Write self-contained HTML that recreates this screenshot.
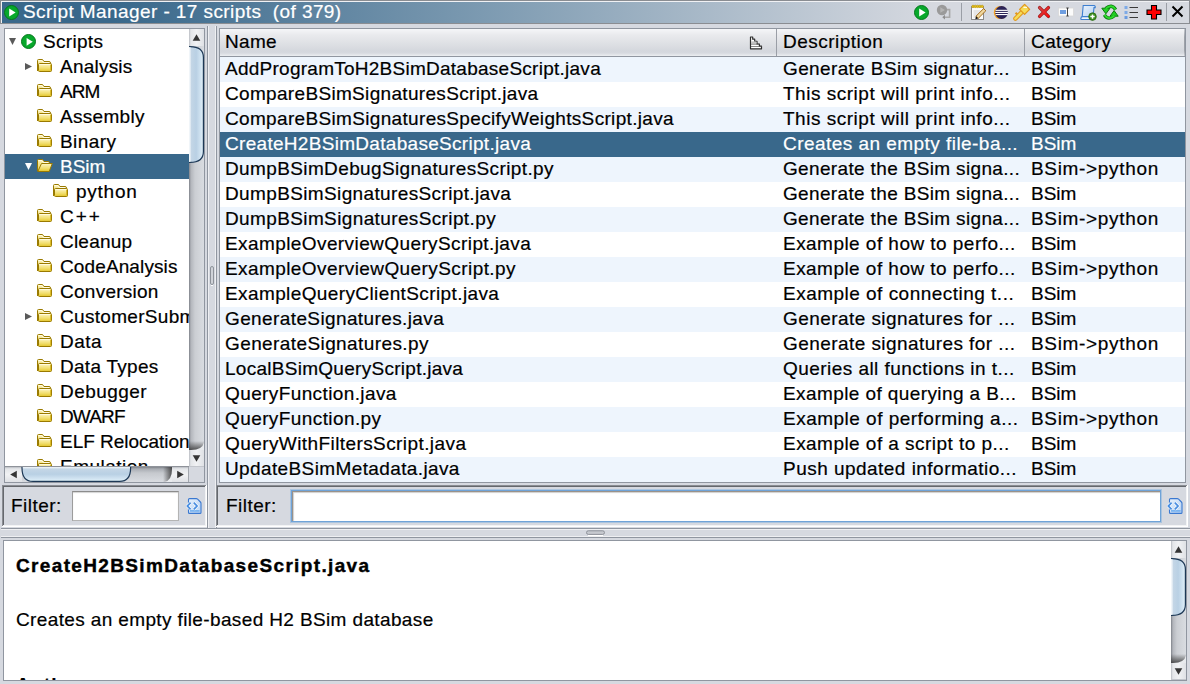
<!DOCTYPE html>
<html><head><meta charset="utf-8"><style>
*{margin:0;padding:0;box-sizing:border-box}
html,body{width:1190px;height:684px;overflow:hidden;background:#d6d9e0;font-family:"Liberation Sans",sans-serif;font-size:19px;color:#000}
.a{position:absolute}
svg.a{display:block}
.t{position:absolute;white-space:nowrap;letter-spacing:0.27px;-webkit-text-stroke:0.2px currentColor;line-height:25px;height:25px}
.w{color:#fff}
.el{letter-spacing:0.72px}
</style></head><body>
<svg width="0" height="0" style="position:absolute"><defs>
<linearGradient id="fg" x1="0" y1="0" x2="0" y2="1"><stop offset="0" stop-color="#fdf6c6"/><stop offset="0.6" stop-color="#f1de6e"/><stop offset="1" stop-color="#e3c52a"/></linearGradient>
<linearGradient id="fgb" x1="0" y1="0" x2="0" y2="1"><stop offset="0" stop-color="#fbf1b4"/><stop offset="1" stop-color="#ead15a"/></linearGradient>
<linearGradient id="thv" x1="0" y1="0" x2="1" y2="0"><stop offset="0" stop-color="#f4f8fb"/><stop offset="0.15" stop-color="#c4d6e6"/><stop offset="0.5" stop-color="#b9d0e4"/><stop offset="0.85" stop-color="#d4e6f3"/><stop offset="1" stop-color="#e6f4fb"/></linearGradient>
<linearGradient id="thh" x1="0" y1="0" x2="0" y2="1"><stop offset="0" stop-color="#f4f8fb"/><stop offset="0.15" stop-color="#c4d6e6"/><stop offset="0.5" stop-color="#b9d0e4"/><stop offset="0.85" stop-color="#d4e6f3"/><stop offset="1" stop-color="#e6f9fd"/></linearGradient>
<linearGradient id="doc" x1="0" y1="0" x2="1" y2="1"><stop offset="0" stop-color="#e9f2fc"/><stop offset="1" stop-color="#b4d0f2"/></linearGradient>
<linearGradient id="trv" x1="0" y1="0" x2="1" y2="0"><stop offset="0" stop-color="#7f838a"/><stop offset="0.13" stop-color="#b3b6bc"/><stop offset="0.4" stop-color="#cbced3"/><stop offset="1" stop-color="#d9dce1"/></linearGradient>
<linearGradient id="trh" x1="0" y1="0" x2="0" y2="1"><stop offset="0" stop-color="#7f838a"/><stop offset="0.13" stop-color="#a9adb3"/><stop offset="0.4" stop-color="#c6c9ce"/><stop offset="1" stop-color="#d9dce1"/></linearGradient>
<linearGradient id="btv" x1="0" y1="0" x2="1" y2="0"><stop offset="0" stop-color="#b9bcc2"/><stop offset="0.12" stop-color="#e4e6e9"/><stop offset="0.5" stop-color="#f1f2f4"/><stop offset="1" stop-color="#dfe1e5"/></linearGradient>
<linearGradient id="bth" x1="0" y1="0" x2="0" y2="1"><stop offset="0" stop-color="#b9bcc2"/><stop offset="0.12" stop-color="#e4e6e9"/><stop offset="0.5" stop-color="#f1f2f4"/><stop offset="1" stop-color="#dfe1e5"/></linearGradient>
<linearGradient id="shv" x1="0" y1="0" x2="0" y2="1"><stop offset="0" stop-color="#3a3a3a" stop-opacity="0"/><stop offset="1" stop-color="#3a3a3a" stop-opacity="0.85"/></linearGradient>
<linearGradient id="shh" x1="0" y1="0" x2="1" y2="0"><stop offset="0" stop-color="#3a3a3a" stop-opacity="0"/><stop offset="1" stop-color="#3a3a3a" stop-opacity="0.85"/></linearGradient>
<radialGradient id="grn" cx="0.4" cy="0.35" r="0.7"><stop offset="0" stop-color="#16c23a"/><stop offset="1" stop-color="#07a52a"/></radialGradient>
</defs></svg>
<div class="a" style="left:0px;top:0px;width:1190px;height:1px;background:#8a8d92;"></div>
<div class="a" style="left:0px;top:0px;width:1px;height:24px;background:#8a8d92;"></div>
<div class="a" style="left:1px;top:1px;width:1188px;height:1px;background:#f0f1f4;"></div>
<div class="a" style="left:1px;top:1px;width:1px;height:22px;background:#f0f1f4;"></div>
<div class="a" style="left:2px;top:2px;width:1187px;height:21px;background:linear-gradient(90deg,#39688b 0px,#39688b 110px,#7c9ab1 480px,#d6d9e0 930px);"></div>
<div class="a" style="left:0px;top:23px;width:1190px;height:1px;background:#8a8d92;"></div>
<div class="a" style="left:1189px;top:0px;width:1px;height:24px;background:#8a8d92;"></div>
<svg class="a" style="left:3.8px;top:4.6px" width="15" height="15" viewBox="0 0 15 15"><circle cx="7.5" cy="7.5" r="7" fill="#08a82b" stroke="#05781c" stroke-width="1"/><path d="M5.2 3.6 L11.6 7.6 L5.2 11.6 Z" fill="#fff"/></svg>
<div class="t w" style="left:23px;top:0px;line-height:24px;letter-spacing:0.420px">Script Manager - 17 scripts&nbsp; (of 379)</div>
<svg class="a" style="left:914px;top:4.6px" width="15" height="15" viewBox="0 0 15 15"><circle cx="7.5" cy="7.5" r="7" fill="#08a82b" stroke="#05781c" stroke-width="1"/><path d="M5.2 3.6 L11.6 7.6 L5.2 11.6 Z" fill="#fff"/></svg>
<svg class="a" style="left:936px;top:4px" width="16" height="16" viewBox="0 0 16 16"><circle cx="6" cy="6" r="5.2" fill="#9a9a9a"/><path d="M4.3 3.2 L9 6 L4.3 8.8 Z" fill="#b4b4b4"/><path d="M11 5.6 L13.6 5.6 L13.6 13.2 L8 13.2" fill="none" stroke="#a8a8a8" stroke-width="1.6"/><path d="M6.3 13.2 L9 10.8 L9 15.6 Z" fill="#8e8e8e"/></svg>
<div class="a" style="left:961px;top:3px;width:1px;height:18px;background:#9a9ea6;"></div>
<svg class="a" style="left:970px;top:4px" width="17" height="16" viewBox="0 0 17 16"><rect x="1.5" y="2.6" width="12" height="12.9" fill="#fbfbfb" stroke="#8a8a8a" stroke-width="1"/><path d="M3.5 7h7M3.5 9h7M3.5 11h5M3.5 13h5" stroke="#c9c9c9" stroke-width="0.8"/><circle cx="3" cy="2.4" r="1.25" fill="#e8c21a" stroke="#b08d00" stroke-width="0.5"/><circle cx="5.3" cy="2.4" r="1.25" fill="#e8c21a" stroke="#b08d00" stroke-width="0.5"/><circle cx="7.6" cy="2.4" r="1.25" fill="#e8c21a" stroke="#b08d00" stroke-width="0.5"/><circle cx="9.9" cy="2.4" r="1.25" fill="#e8c21a" stroke="#b08d00" stroke-width="0.5"/><circle cx="12.2" cy="2.4" r="1.25" fill="#e8c21a" stroke="#b08d00" stroke-width="0.5"/><path d="M6 12.2 L13.6 4.6 L15.8 6.8 L8.2 14.4 Z" fill="#f0d8a0" stroke="#9a5e08" stroke-width="0.9"/><path d="M6 12.2 L8.2 14.4 L5.3 15.3 Z" fill="#111"/></svg>
<svg class="a" style="left:993px;top:5px" width="16" height="15" viewBox="0 0 16 15"><circle cx="7.4" cy="7.5" r="6.6" fill="#f5a020"/><circle cx="8.6" cy="7.5" r="6.4" fill="#2b2357"/><rect x="2.6" y="4.8" width="12.2" height="1.1" fill="#fff"/><rect x="2.2" y="6.9" width="12.8" height="1.1" fill="#fff"/><rect x="2.6" y="9.0" width="12.2" height="1.1" fill="#fff"/></svg>
<svg class="a" style="left:1013px;top:3px" width="18" height="18" viewBox="0 0 18 18"><path d="M8.6 9.4 L2.4 15.6" stroke="#e2981c" stroke-width="4.4" stroke-linecap="round"/><path d="M4.6 11.8 L2.6 9.8 M6.6 13.2 L5.2 11.8" stroke="#e2981c" stroke-width="2.2"/><path d="M8.6 9.4 L2.4 15.6" stroke="#f6dc58" stroke-width="2.4" stroke-linecap="round"/><path d="M11.6 1.4 L16.6 6.4 L11.6 11.4 L6.6 6.4 Z" fill="#f6dc58" stroke="#e2981c" stroke-width="1.3" stroke-linejoin="round"/><path d="M11 4.4 L13.4 4.4" stroke="#fffbe0" stroke-width="1.4" stroke-linecap="round"/></svg>
<svg class="a" style="left:1037px;top:5px" width="14" height="14" viewBox="0 0 14 14"><defs><linearGradient id="rx" x1="0" y1="0" x2="1" y2="1"><stop offset="0" stop-color="#d04848"/><stop offset="1" stop-color="#ff0a0a"/></linearGradient></defs><path d="M2.6 2.6 L11.4 11.4 M11.4 2.6 L2.6 11.4" stroke="#a01818" stroke-width="3.4" stroke-linecap="round"/><path d="M2.6 2.6 L11.4 11.4 M11.4 2.6 L2.6 11.4" stroke="url(#rx)" stroke-width="2" stroke-linecap="round"/></svg>
<svg class="a" style="left:1058px;top:7px" width="16" height="10" viewBox="0 0 16 10"><rect x="0.5" y="1" width="15" height="8" fill="#fbfbfb" stroke="#d8d8d8" stroke-width="0.8"/><rect x="2" y="3" width="6" height="4" fill="#6f9ee0"/><path d="M9.5 1v8M8.3 1h2.4M8.3 9h2.4" stroke="#333" stroke-width="0.9"/></svg>
<svg class="a" style="left:1080px;top:4px" width="17" height="17" viewBox="0 0 17 17"><path d="M3.2 1.5 L14 1.5 Q15.6 1.8 15.2 3.6 L14 3.6 L13 12.8 L2.2 12.8 Z" fill="url(#doc)" stroke="#3d7fd0" stroke-width="1.1"/><path d="M0.8 14.5 Q1 12.5 3 12.6 L13 12.6 L12.4 15.5 L2 15.5 Q0.6 15.5 0.8 14.5 Z" fill="#eef4fc" stroke="#3d7fd0" stroke-width="1.1"/><circle cx="12.5" cy="12.6" r="3.8" fill="#3b8d1e" stroke="#2a6a12" stroke-width="0.8"/><path d="M12.5 10.4v4.4M10.3 12.6h4.4" stroke="#fff" stroke-width="1.5"/></svg>
<svg class="a" style="left:1101px;top:4px" width="18" height="16" viewBox="0 0 18 16"><g id="ra"><path d="M14.6 5.6 Q10.8 -0.6 4.6 4.6" stroke="#0b7a0e" stroke-width="3.4" fill="none"/><path d="M0.8 4.2 L9 4.2 L4.9 9.8 Z" fill="#20cf22" stroke="#0b7a0e" stroke-width="1"/><path d="M14.6 5.6 Q10.8 -0.6 4.6 4.6" stroke="#2ddc2d" stroke-width="1.8" fill="none"/></g><g transform="rotate(180 9 8.2)"><path d="M14.6 5.6 Q10.8 -0.6 4.6 4.6" stroke="#0b7a0e" stroke-width="3.4" fill="none"/><path d="M0.8 4.2 L9 4.2 L4.9 9.8 Z" fill="#20cf22" stroke="#0b7a0e" stroke-width="1"/><path d="M14.6 5.6 Q10.8 -0.6 4.6 4.6" stroke="#2ddc2d" stroke-width="1.8" fill="none"/></g></svg>
<svg class="a" style="left:1124px;top:5px" width="15" height="15" viewBox="0 0 15 15"><rect x="0.5" y="1" width="3" height="3" fill="#7eaae6"/><rect x="0.5" y="6" width="3" height="3" fill="#7eaae6"/><rect x="0.5" y="11" width="3" height="3" fill="#6b9be0"/><path d="M5.5 2.5h8.5M5.5 7.5h8.5M5.5 12.5h8.5" stroke="#3a3a3a" stroke-width="1"/></svg>
<svg class="a" style="left:1146px;top:4px" width="16" height="16" viewBox="0 0 16 16"><path d="M5.5 1.5 h5 v4.5 h4.5 v4.5 h-4.5 v4.5 h-5 v-4.5 h-4.5 v-4.5 h4.5 Z" fill="#f00" stroke="#000" stroke-width="1.1"/></svg>
<div class="a" style="left:1166px;top:3px;width:1px;height:18px;background:#9a9ea6;"></div>
<svg class="a" style="left:1171px;top:5px" width="13" height="13" viewBox="0 0 13 13"><path d="M1.5 1.5 L11.5 11.5 M11.5 1.5 L1.5 11.5" stroke="#000" stroke-width="2"/></svg>
<div class="a" style="left:4px;top:28px;width:201px;height:455px;background:#fff;border:1px solid #9096a0"></div>
<div class="a" style="left:5px;top:29px;width:184px;height:25px;overflow:hidden"><svg class="a" style="left:4px;top:9px" width="8" height="8" viewBox="0 0 8 8"><path d="M0 0 L7 0 L3.5 7 Z" fill="#5a5a5a"/></svg><svg class="a" style="left:16px;top:5px" width="15" height="15" viewBox="0 0 15 15"><circle cx="7.5" cy="7.5" r="7" fill="#08a82b" stroke="#05781c" stroke-width="1"/><path d="M5.6 3.9 L11.8 7.8 L5.6 11.7 Z" fill="#fff"/></svg><div class="t" style="left:38px;top:0px;letter-spacing:0.307px">Scripts</div></div>
<div class="a" style="left:5px;top:54px;width:184px;height:25px;overflow:hidden"><svg class="a" style="left:20px;top:9px" width="8" height="8" viewBox="0 0 8 8"><path d="M0 0 L7 3.5 L0 7 Z" fill="#5a5a5a"/></svg><svg class="a" style="left:32px;top:5px" width="16" height="15" viewBox="0 0 16 15"><path d="M0.5 12 V1.5 Q0.5 0.5 1.5 0.5 H5.5 L7 2.5 H12 Q13.5 2.5 13.5 4 V5" fill="url(#fgb)" stroke="#9a7a00" stroke-width="1"/><path d="M1.5 1.6 H5 L6.3 3.5 H12.4" fill="none" stroke="#fffce8" stroke-width="1"/><rect x="1.5" y="4.5" width="13" height="8" rx="1" fill="url(#fg)" stroke="#9a7a00" stroke-width="1"/><path d="M2.5 5.6 H13.5" stroke="#fffbe0" stroke-width="1"/><path d="M13.6 5.6 V11.4" stroke="#d9b820" stroke-width="1"/></svg><div class="t" style="left:55px;top:0px;letter-spacing:0.221px">Analysis</div></div>
<div class="a" style="left:5px;top:79px;width:184px;height:25px;overflow:hidden"><svg class="a" style="left:32px;top:5px" width="16" height="15" viewBox="0 0 16 15"><path d="M0.5 12 V1.5 Q0.5 0.5 1.5 0.5 H5.5 L7 2.5 H12 Q13.5 2.5 13.5 4 V5" fill="url(#fgb)" stroke="#9a7a00" stroke-width="1"/><path d="M1.5 1.6 H5 L6.3 3.5 H12.4" fill="none" stroke="#fffce8" stroke-width="1"/><rect x="1.5" y="4.5" width="13" height="8" rx="1" fill="url(#fg)" stroke="#9a7a00" stroke-width="1"/><path d="M2.5 5.6 H13.5" stroke="#fffbe0" stroke-width="1"/><path d="M13.6 5.6 V11.4" stroke="#d9b820" stroke-width="1"/></svg><div class="t" style="left:55px;top:0px;letter-spacing:-0.922px">ARM</div></div>
<div class="a" style="left:5px;top:104px;width:184px;height:25px;overflow:hidden"><svg class="a" style="left:32px;top:5px" width="16" height="15" viewBox="0 0 16 15"><path d="M0.5 12 V1.5 Q0.5 0.5 1.5 0.5 H5.5 L7 2.5 H12 Q13.5 2.5 13.5 4 V5" fill="url(#fgb)" stroke="#9a7a00" stroke-width="1"/><path d="M1.5 1.6 H5 L6.3 3.5 H12.4" fill="none" stroke="#fffce8" stroke-width="1"/><rect x="1.5" y="4.5" width="13" height="8" rx="1" fill="url(#fg)" stroke="#9a7a00" stroke-width="1"/><path d="M2.5 5.6 H13.5" stroke="#fffbe0" stroke-width="1"/><path d="M13.6 5.6 V11.4" stroke="#d9b820" stroke-width="1"/></svg><div class="t" style="left:55px;top:0px;letter-spacing:0.309px">Assembly</div></div>
<div class="a" style="left:5px;top:129px;width:184px;height:25px;overflow:hidden"><svg class="a" style="left:32px;top:5px" width="16" height="15" viewBox="0 0 16 15"><path d="M0.5 12 V1.5 Q0.5 0.5 1.5 0.5 H5.5 L7 2.5 H12 Q13.5 2.5 13.5 4 V5" fill="url(#fgb)" stroke="#9a7a00" stroke-width="1"/><path d="M1.5 1.6 H5 L6.3 3.5 H12.4" fill="none" stroke="#fffce8" stroke-width="1"/><rect x="1.5" y="4.5" width="13" height="8" rx="1" fill="url(#fg)" stroke="#9a7a00" stroke-width="1"/><path d="M2.5 5.6 H13.5" stroke="#fffbe0" stroke-width="1"/><path d="M13.6 5.6 V11.4" stroke="#d9b820" stroke-width="1"/></svg><div class="t" style="left:55px;top:0px;letter-spacing:0.450px">Binary</div></div>
<div class="a" style="left:5px;top:154px;width:184px;height:25px;overflow:hidden"><div class="a" style="left:0;top:0;width:184px;height:25px;background:#39688b"></div><svg class="a" style="left:20px;top:9px" width="8" height="8" viewBox="0 0 8 8"><path d="M0 0 L7 0 L3.5 7 Z" fill="#fff"/></svg><svg class="a" style="left:32px;top:5px" width="16" height="15" viewBox="0 0 16 15"><path d="M0.5 12 V1.5 Q0.5 0.5 1.5 0.5 H5.5 L7 2.5 H11 Q12.5 2.5 12.5 4 V5" fill="url(#fgb)" stroke="#9a7a00" stroke-width="1"/><path d="M1.5 1.6 H5 L6.3 3.5 H11.4" fill="none" stroke="#fffce8" stroke-width="1"/><path d="M0.8 12.5 L4.5 4.5 H15.3 L12.2 12.5 Z" fill="url(#fg)" stroke="#9a7a00" stroke-width="1"/></svg><div class="t w" style="left:55px;top:0px;letter-spacing:-0.028px">BSim</div></div>
<div class="a" style="left:5px;top:179px;width:184px;height:25px;overflow:hidden"><svg class="a" style="left:48px;top:5px" width="16" height="15" viewBox="0 0 16 15"><path d="M0.5 12 V1.5 Q0.5 0.5 1.5 0.5 H5.5 L7 2.5 H12 Q13.5 2.5 13.5 4 V5" fill="url(#fgb)" stroke="#9a7a00" stroke-width="1"/><path d="M1.5 1.6 H5 L6.3 3.5 H12.4" fill="none" stroke="#fffce8" stroke-width="1"/><rect x="1.5" y="4.5" width="13" height="8" rx="1" fill="url(#fg)" stroke="#9a7a00" stroke-width="1"/><path d="M2.5 5.6 H13.5" stroke="#fffbe0" stroke-width="1"/><path d="M13.6 5.6 V11.4" stroke="#d9b820" stroke-width="1"/></svg><div class="t" style="left:71px;top:0px;letter-spacing:0.753px">python</div></div>
<div class="a" style="left:5px;top:204px;width:184px;height:25px;overflow:hidden"><svg class="a" style="left:32px;top:5px" width="16" height="15" viewBox="0 0 16 15"><path d="M0.5 12 V1.5 Q0.5 0.5 1.5 0.5 H5.5 L7 2.5 H12 Q13.5 2.5 13.5 4 V5" fill="url(#fgb)" stroke="#9a7a00" stroke-width="1"/><path d="M1.5 1.6 H5 L6.3 3.5 H12.4" fill="none" stroke="#fffce8" stroke-width="1"/><rect x="1.5" y="4.5" width="13" height="8" rx="1" fill="url(#fg)" stroke="#9a7a00" stroke-width="1"/><path d="M2.5 5.6 H13.5" stroke="#fffbe0" stroke-width="1"/><path d="M13.6 5.6 V11.4" stroke="#d9b820" stroke-width="1"/></svg><div class="t" style="left:55px;top:0px;letter-spacing:1.957px">C++</div></div>
<div class="a" style="left:5px;top:229px;width:184px;height:25px;overflow:hidden"><svg class="a" style="left:32px;top:5px" width="16" height="15" viewBox="0 0 16 15"><path d="M0.5 12 V1.5 Q0.5 0.5 1.5 0.5 H5.5 L7 2.5 H12 Q13.5 2.5 13.5 4 V5" fill="url(#fgb)" stroke="#9a7a00" stroke-width="1"/><path d="M1.5 1.6 H5 L6.3 3.5 H12.4" fill="none" stroke="#fffce8" stroke-width="1"/><rect x="1.5" y="4.5" width="13" height="8" rx="1" fill="url(#fg)" stroke="#9a7a00" stroke-width="1"/><path d="M2.5 5.6 H13.5" stroke="#fffbe0" stroke-width="1"/><path d="M13.6 5.6 V11.4" stroke="#d9b820" stroke-width="1"/></svg><div class="t" style="left:55px;top:0px;letter-spacing:0.214px">Cleanup</div></div>
<div class="a" style="left:5px;top:254px;width:184px;height:25px;overflow:hidden"><svg class="a" style="left:32px;top:5px" width="16" height="15" viewBox="0 0 16 15"><path d="M0.5 12 V1.5 Q0.5 0.5 1.5 0.5 H5.5 L7 2.5 H12 Q13.5 2.5 13.5 4 V5" fill="url(#fgb)" stroke="#9a7a00" stroke-width="1"/><path d="M1.5 1.6 H5 L6.3 3.5 H12.4" fill="none" stroke="#fffce8" stroke-width="1"/><rect x="1.5" y="4.5" width="13" height="8" rx="1" fill="url(#fg)" stroke="#9a7a00" stroke-width="1"/><path d="M2.5 5.6 H13.5" stroke="#fffbe0" stroke-width="1"/><path d="M13.6 5.6 V11.4" stroke="#d9b820" stroke-width="1"/></svg><div class="t" style="left:55px;top:0px;letter-spacing:0.117px">CodeAnalysis</div></div>
<div class="a" style="left:5px;top:279px;width:184px;height:25px;overflow:hidden"><svg class="a" style="left:32px;top:5px" width="16" height="15" viewBox="0 0 16 15"><path d="M0.5 12 V1.5 Q0.5 0.5 1.5 0.5 H5.5 L7 2.5 H12 Q13.5 2.5 13.5 4 V5" fill="url(#fgb)" stroke="#9a7a00" stroke-width="1"/><path d="M1.5 1.6 H5 L6.3 3.5 H12.4" fill="none" stroke="#fffce8" stroke-width="1"/><rect x="1.5" y="4.5" width="13" height="8" rx="1" fill="url(#fg)" stroke="#9a7a00" stroke-width="1"/><path d="M2.5 5.6 H13.5" stroke="#fffbe0" stroke-width="1"/><path d="M13.6 5.6 V11.4" stroke="#d9b820" stroke-width="1"/></svg><div class="t" style="left:55px;top:0px;letter-spacing:0.257px">Conversion</div></div>
<div class="a" style="left:5px;top:304px;width:184px;height:25px;overflow:hidden"><svg class="a" style="left:20px;top:9px" width="8" height="8" viewBox="0 0 8 8"><path d="M0 0 L7 3.5 L0 7 Z" fill="#5a5a5a"/></svg><svg class="a" style="left:32px;top:5px" width="16" height="15" viewBox="0 0 16 15"><path d="M0.5 12 V1.5 Q0.5 0.5 1.5 0.5 H5.5 L7 2.5 H12 Q13.5 2.5 13.5 4 V5" fill="url(#fgb)" stroke="#9a7a00" stroke-width="1"/><path d="M1.5 1.6 H5 L6.3 3.5 H12.4" fill="none" stroke="#fffce8" stroke-width="1"/><rect x="1.5" y="4.5" width="13" height="8" rx="1" fill="url(#fg)" stroke="#9a7a00" stroke-width="1"/><path d="M2.5 5.6 H13.5" stroke="#fffbe0" stroke-width="1"/><path d="M13.6 5.6 V11.4" stroke="#d9b820" stroke-width="1"/></svg><div class="t" style="left:55px;top:0px;letter-spacing:0.312px">CustomerSubmission</div></div>
<div class="a" style="left:5px;top:329px;width:184px;height:25px;overflow:hidden"><svg class="a" style="left:32px;top:5px" width="16" height="15" viewBox="0 0 16 15"><path d="M0.5 12 V1.5 Q0.5 0.5 1.5 0.5 H5.5 L7 2.5 H12 Q13.5 2.5 13.5 4 V5" fill="url(#fgb)" stroke="#9a7a00" stroke-width="1"/><path d="M1.5 1.6 H5 L6.3 3.5 H12.4" fill="none" stroke="#fffce8" stroke-width="1"/><rect x="1.5" y="4.5" width="13" height="8" rx="1" fill="url(#fg)" stroke="#9a7a00" stroke-width="1"/><path d="M2.5 5.6 H13.5" stroke="#fffbe0" stroke-width="1"/><path d="M13.6 5.6 V11.4" stroke="#d9b820" stroke-width="1"/></svg><div class="t" style="left:55px;top:0px;letter-spacing:0.472px">Data</div></div>
<div class="a" style="left:5px;top:354px;width:184px;height:25px;overflow:hidden"><svg class="a" style="left:32px;top:5px" width="16" height="15" viewBox="0 0 16 15"><path d="M0.5 12 V1.5 Q0.5 0.5 1.5 0.5 H5.5 L7 2.5 H12 Q13.5 2.5 13.5 4 V5" fill="url(#fgb)" stroke="#9a7a00" stroke-width="1"/><path d="M1.5 1.6 H5 L6.3 3.5 H12.4" fill="none" stroke="#fffce8" stroke-width="1"/><rect x="1.5" y="4.5" width="13" height="8" rx="1" fill="url(#fg)" stroke="#9a7a00" stroke-width="1"/><path d="M2.5 5.6 H13.5" stroke="#fffbe0" stroke-width="1"/><path d="M13.6 5.6 V11.4" stroke="#d9b820" stroke-width="1"/></svg><div class="t" style="left:55px;top:0px;letter-spacing:0.280px">Data Types</div></div>
<div class="a" style="left:5px;top:379px;width:184px;height:25px;overflow:hidden"><svg class="a" style="left:32px;top:5px" width="16" height="15" viewBox="0 0 16 15"><path d="M0.5 12 V1.5 Q0.5 0.5 1.5 0.5 H5.5 L7 2.5 H12 Q13.5 2.5 13.5 4 V5" fill="url(#fgb)" stroke="#9a7a00" stroke-width="1"/><path d="M1.5 1.6 H5 L6.3 3.5 H12.4" fill="none" stroke="#fffce8" stroke-width="1"/><rect x="1.5" y="4.5" width="13" height="8" rx="1" fill="url(#fg)" stroke="#9a7a00" stroke-width="1"/><path d="M2.5 5.6 H13.5" stroke="#fffbe0" stroke-width="1"/><path d="M13.6 5.6 V11.4" stroke="#d9b820" stroke-width="1"/></svg><div class="t" style="left:55px;top:0px;letter-spacing:0.458px">Debugger</div></div>
<div class="a" style="left:5px;top:404px;width:184px;height:25px;overflow:hidden"><svg class="a" style="left:32px;top:5px" width="16" height="15" viewBox="0 0 16 15"><path d="M0.5 12 V1.5 Q0.5 0.5 1.5 0.5 H5.5 L7 2.5 H12 Q13.5 2.5 13.5 4 V5" fill="url(#fgb)" stroke="#9a7a00" stroke-width="1"/><path d="M1.5 1.6 H5 L6.3 3.5 H12.4" fill="none" stroke="#fffce8" stroke-width="1"/><rect x="1.5" y="4.5" width="13" height="8" rx="1" fill="url(#fg)" stroke="#9a7a00" stroke-width="1"/><path d="M2.5 5.6 H13.5" stroke="#fffbe0" stroke-width="1"/><path d="M13.6 5.6 V11.4" stroke="#d9b820" stroke-width="1"/></svg><div class="t" style="left:55px;top:0px;letter-spacing:-0.861px">DWARF</div></div>
<div class="a" style="left:5px;top:429px;width:184px;height:25px;overflow:hidden"><svg class="a" style="left:32px;top:5px" width="16" height="15" viewBox="0 0 16 15"><path d="M0.5 12 V1.5 Q0.5 0.5 1.5 0.5 H5.5 L7 2.5 H12 Q13.5 2.5 13.5 4 V5" fill="url(#fgb)" stroke="#9a7a00" stroke-width="1"/><path d="M1.5 1.6 H5 L6.3 3.5 H12.4" fill="none" stroke="#fffce8" stroke-width="1"/><rect x="1.5" y="4.5" width="13" height="8" rx="1" fill="url(#fg)" stroke="#9a7a00" stroke-width="1"/><path d="M2.5 5.6 H13.5" stroke="#fffbe0" stroke-width="1"/><path d="M13.6 5.6 V11.4" stroke="#d9b820" stroke-width="1"/></svg><div class="t" style="left:55px;top:0px;letter-spacing:-0.026px">ELF Relocation</div></div>
<div class="a" style="left:5px;top:454px;width:184px;height:12px;overflow:hidden"><svg class="a" style="left:32px;top:5px" width="16" height="15" viewBox="0 0 16 15"><path d="M0.5 12 V1.5 Q0.5 0.5 1.5 0.5 H5.5 L7 2.5 H12 Q13.5 2.5 13.5 4 V5" fill="url(#fgb)" stroke="#9a7a00" stroke-width="1"/><path d="M1.5 1.6 H5 L6.3 3.5 H12.4" fill="none" stroke="#fffce8" stroke-width="1"/><rect x="1.5" y="4.5" width="13" height="8" rx="1" fill="url(#fg)" stroke="#9a7a00" stroke-width="1"/><path d="M2.5 5.6 H13.5" stroke="#fffbe0" stroke-width="1"/><path d="M13.6 5.6 V11.4" stroke="#d9b820" stroke-width="1"/></svg><div class="t" style="left:55px;top:0px;letter-spacing:0.480px">Emulation</div></div>
<svg class="a" style="left:189px;top:29px" width="15" height="438" viewBox="0 0 15 438"><rect x="0" y="0" width="15" height="438" fill="url(#trv)"/><rect x="0" y="0" width="15" height="17" fill="url(#btv)"/><rect x="0" y="412" width="15" height="9" fill="url(#shv)"/><path d="M15.2 411 Q15.2 421 2 421 L2 422 L15.2 422 Z" fill="#e9ebee"/><rect x="0" y="421" width="15" height="17" fill="url(#btv)"/><rect x="0" y="437" width="15" height="1" fill="#c3c6cc"/><path d="M7.5 5.2 L11.3 11.8 L3.7 11.8 Z" fill="#353535"/><path d="M3.7 426.2 L11.3 426.2 L7.5 432.8 Z" fill="#353535"/><path d="M0 17.6 L1 17.6 Q14.4 17.6 14.4 28.5 L14.4 122.5 Q14.4 133.4 1 133.4 L0 133.4" fill="url(#thv)" stroke="#1d3856" stroke-width="1.2"/><rect x="0" y="18.2" width="1.4" height="114.6" fill="#f0f5f9"/></svg>
<svg class="a" style="left:5px;top:467px" width="184" height="15" viewBox="0 0 184 15"><rect x="0" y="0" width="184" height="15" fill="url(#trh)"/><rect x="0" y="0" width="17" height="15" fill="url(#bth)"/><rect x="158" y="0" width="9" height="15" fill="url(#shh)"/><path d="M157 15.2 Q167 15.2 167 2 L168 2 L168 15.2 Z" fill="#e9ebee"/><rect x="167" y="0" width="17" height="15" fill="url(#bth)"/><rect x="183" y="0" width="1" height="15" fill="#a3a7ae"/><path d="M5.2 7.5 L11.8 3.7 L11.8 11.3 Z" fill="#353535"/><path d="M172.2 3.7 L178.8 7.5 L172.2 11.3 Z" fill="#353535"/><path d="M17 0 L17 1 Q17 14.4 28 14.4 L114.6 14.4 Q125.6 14.4 125.6 1 L125.6 0" fill="url(#thh)" stroke="#1d3856" stroke-width="1.2"/></svg>
<div class="a" style="left:189px;top:467px;width:15px;height:15px;background:#d6d9e0;"></div>
<div class="a" style="left:5px;top:466px;width:184px;height:1px;background:#8f939a;"></div>
<div class="a" style="left:219px;top:28px;width:967px;height:455px;background:#fff;border:1px solid #9096a0"></div>
<div class="a" style="left:220px;top:29px;width:965px;height:27px;background:linear-gradient(#f5f6f8 0px,#e9eaed 6px,#dfe1e5 14px,#d4d7dd 22px,#d6d9df 24px,#eceef1 27px);"></div>
<div class="a" style="left:1184px;top:29px;width:1px;height:27px;background:linear-gradient(#c8cbd0,#9ea2a9 30%,#9ea2a9 80%,#c8cbd0);"></div>
<div class="a" style="left:220px;top:56px;width:965px;height:1px;background:#9096a0;"></div>
<div class="a" style="left:776px;top:29px;width:1px;height:27px;background:#9a9ea6;"></div>
<div class="a" style="left:1024px;top:29px;width:1px;height:27px;background:#9a9ea6;"></div>
<div class="t" style="left:225px;top:28px;line-height:27px;letter-spacing:0.310px">Name</div>
<div class="t" style="left:783px;top:28px;line-height:27px;letter-spacing:0.473px">Description</div>
<div class="t" style="left:1031px;top:28px;line-height:27px;letter-spacing:0.412px">Category</div>
<svg class="a" style="left:749px;top:36px" width="14" height="14" viewBox="0 0 14 14"><path d="M1.5 1 h2.2 v2.2 h2 v2.2 h2.3 v2.6 h2.4 v2.2 h2.1 v2.6 h-11 Z" fill="#fff" stroke="#2e2e2e" stroke-width="1.2" stroke-linejoin="round"/><rect x="2.1" y="5.4" width="5.4" height="2.2" fill="#c4c4c4"/><path d="M2 8.2 h8.6 M2 10.5 h10.7" stroke="#555" stroke-width="0.7"/></svg>
<div class="a" style="left:220px;top:57px;width:965px;height:25px;background:#eef5fd;"></div>
<div class="t" style="left:225px;top:56px;letter-spacing:0.257px">AddProgramToH2BSimDatabaseScript.java</div>
<div class="t" style="left:783px;top:56px;letter-spacing:0.373px">Generate BSim signatur...</div>
<div class="t" style="left:1031px;top:56px;letter-spacing:-0.028px">BSim</div>
<div class="t" style="left:225px;top:81px;letter-spacing:0.325px">CompareBSimSignaturesScript.java</div>
<div class="t" style="left:783px;top:81px;letter-spacing:0.513px">This script will print info...</div>
<div class="t" style="left:1031px;top:81px;letter-spacing:-0.028px">BSim</div>
<div class="a" style="left:220px;top:107px;width:965px;height:25px;background:#eef5fd;"></div>
<div class="t" style="left:225px;top:106px;letter-spacing:0.333px">CompareBSimSignaturesSpecifyWeightsScript.java</div>
<div class="t" style="left:783px;top:106px;letter-spacing:0.513px">This script will print info...</div>
<div class="t" style="left:1031px;top:106px;letter-spacing:-0.028px">BSim</div>
<div class="a" style="left:220px;top:132px;width:965px;height:25px;background:#39688b;"></div>
<div class="t w" style="left:225px;top:131px;letter-spacing:0.301px">CreateH2BSimDatabaseScript.java</div>
<div class="t w" style="left:783px;top:131px;letter-spacing:0.455px">Creates an empty file-ba...</div>
<div class="t w" style="left:1031px;top:131px;letter-spacing:-0.028px">BSim</div>
<div class="a" style="left:220px;top:157px;width:965px;height:25px;background:#eef5fd;"></div>
<div class="t" style="left:225px;top:156px;letter-spacing:0.377px">DumpBSimDebugSignaturesScript.py</div>
<div class="t" style="left:783px;top:156px;letter-spacing:0.345px">Generate the BSim signa...</div>
<div class="t" style="left:1031px;top:156px;letter-spacing:0.673px">BSim-&gt;python</div>
<div class="t" style="left:225px;top:181px;letter-spacing:0.368px">DumpBSimSignaturesScript.java</div>
<div class="t" style="left:783px;top:181px;letter-spacing:0.345px">Generate the BSim signa...</div>
<div class="t" style="left:1031px;top:181px;letter-spacing:-0.028px">BSim</div>
<div class="a" style="left:220px;top:207px;width:965px;height:25px;background:#eef5fd;"></div>
<div class="t" style="left:225px;top:206px;letter-spacing:0.377px">DumpBSimSignaturesScript.py</div>
<div class="t" style="left:783px;top:206px;letter-spacing:0.345px">Generate the BSim signa...</div>
<div class="t" style="left:1031px;top:206px;letter-spacing:0.673px">BSim-&gt;python</div>
<div class="t" style="left:225px;top:231px;letter-spacing:0.409px">ExampleOverviewQueryScript.java</div>
<div class="t" style="left:783px;top:231px;letter-spacing:0.459px">Example of how to perfo...</div>
<div class="t" style="left:1031px;top:231px;letter-spacing:-0.028px">BSim</div>
<div class="a" style="left:220px;top:257px;width:965px;height:25px;background:#eef5fd;"></div>
<div class="t" style="left:225px;top:256px;letter-spacing:0.420px">ExampleOverviewQueryScript.py</div>
<div class="t" style="left:783px;top:256px;letter-spacing:0.459px">Example of how to perfo...</div>
<div class="t" style="left:1031px;top:256px;letter-spacing:0.673px">BSim-&gt;python</div>
<div class="t" style="left:225px;top:281px;letter-spacing:0.392px">ExampleQueryClientScript.java</div>
<div class="t" style="left:783px;top:281px;letter-spacing:0.482px">Example of connecting t...</div>
<div class="t" style="left:1031px;top:281px;letter-spacing:-0.028px">BSim</div>
<div class="a" style="left:220px;top:307px;width:965px;height:25px;background:#eef5fd;"></div>
<div class="t" style="left:225px;top:306px;letter-spacing:0.389px">GenerateSignatures.java</div>
<div class="t" style="left:783px;top:306px;letter-spacing:0.433px">Generate signatures for ...</div>
<div class="t" style="left:1031px;top:306px;letter-spacing:-0.028px">BSim</div>
<div class="t" style="left:225px;top:331px;letter-spacing:0.402px">GenerateSignatures.py</div>
<div class="t" style="left:783px;top:331px;letter-spacing:0.433px">Generate signatures for ...</div>
<div class="t" style="left:1031px;top:331px;letter-spacing:0.673px">BSim-&gt;python</div>
<div class="a" style="left:220px;top:357px;width:965px;height:25px;background:#eef5fd;"></div>
<div class="t" style="left:225px;top:356px;letter-spacing:0.278px">LocalBSimQueryScript.java</div>
<div class="t" style="left:783px;top:356px;letter-spacing:0.452px">Queries all functions in t...</div>
<div class="t" style="left:1031px;top:356px;letter-spacing:-0.028px">BSim</div>
<div class="t" style="left:225px;top:381px;letter-spacing:0.391px">QueryFunction.java</div>
<div class="t" style="left:783px;top:381px;letter-spacing:0.405px">Example of querying a B...</div>
<div class="t" style="left:1031px;top:381px;letter-spacing:-0.028px">BSim</div>
<div class="a" style="left:220px;top:407px;width:965px;height:25px;background:#eef5fd;"></div>
<div class="t" style="left:225px;top:406px;letter-spacing:0.408px">QueryFunction.py</div>
<div class="t" style="left:783px;top:406px;letter-spacing:0.486px">Example of performing a...</div>
<div class="t" style="left:1031px;top:406px;letter-spacing:0.673px">BSim-&gt;python</div>
<div class="t" style="left:225px;top:431px;letter-spacing:0.416px">QueryWithFiltersScript.java</div>
<div class="t" style="left:783px;top:431px;letter-spacing:0.458px">Example of a script to p...</div>
<div class="t" style="left:1031px;top:431px;letter-spacing:-0.028px">BSim</div>
<div class="a" style="left:220px;top:457px;width:965px;height:25px;background:#eef5fd;"></div>
<div class="t" style="left:225px;top:456px;letter-spacing:0.383px">UpdateBSimMetadata.java</div>
<div class="t" style="left:783px;top:456px;letter-spacing:0.468px">Push updated informatio...</div>
<div class="t" style="left:1031px;top:456px;letter-spacing:-0.028px">BSim</div>
<div class="a" style="left:207px;top:26px;width:1px;height:503px;background:#9096a0;"></div>
<div class="a" style="left:208px;top:26px;width:1px;height:503px;background:#eeeff2;"></div>
<div class="a" style="left:215px;top:26px;width:1px;height:503px;background:#eeeff2;"></div>
<div class="a" style="left:216px;top:26px;width:1px;height:503px;background:#9096a0;"></div>
<svg class="a" style="left:210px;top:266px" width="4" height="20" viewBox="0 0 4 20"><rect x="0.5" y="0.5" width="3" height="18" rx="1.5" fill="#d0d3d9" stroke="#8e929a" stroke-width="1"/><path d="M1 19.5h2" stroke="#fff"/></svg>
<div class="a" style="left:1px;top:528px;width:1189px;height:1px;background:#9096a0;"></div>
<div class="a" style="left:1px;top:529px;width:1189px;height:1px;background:#eeeff2;"></div>
<div class="a" style="left:1px;top:536px;width:1189px;height:1px;background:#eeeff2;"></div>
<div class="a" style="left:1px;top:537px;width:1189px;height:1px;background:#9096a0;"></div>
<svg class="a" style="left:586px;top:530px" width="19" height="6" viewBox="0 0 19 6"><rect x="0.5" y="0.8" width="18" height="3.6" rx="1.8" fill="#c6c9cf" stroke="#8e929a" stroke-width="1"/><path d="M2 5.5h15" stroke="#fff"/></svg>
<div class="a" style="left:2px;top:485px;width:205px;height:1px;background:#8a8d93;"></div>
<div class="a" style="left:2px;top:485px;width:1px;height:42px;background:#8a8d93;"></div>
<div class="a" style="left:3px;top:486px;width:203px;height:1px;background:#65686d;"></div>
<div class="a" style="left:3px;top:486px;width:1px;height:40px;background:#65686d;"></div>
<div class="a" style="left:3px;top:525px;width:203px;height:1px;background:#f2f3f5;"></div>
<div class="a" style="left:205px;top:486px;width:1px;height:40px;background:#f2f3f5;"></div>
<div class="a" style="left:2px;top:526px;width:205px;height:1px;background:#fff;"></div>
<div class="a" style="left:206px;top:485px;width:1px;height:42px;background:#fff;"></div>
<div class="a" style="left:216px;top:485px;width:972px;height:1px;background:#8a8d93;"></div>
<div class="a" style="left:216px;top:485px;width:1px;height:42px;background:#8a8d93;"></div>
<div class="a" style="left:217px;top:486px;width:970px;height:1px;background:#65686d;"></div>
<div class="a" style="left:217px;top:486px;width:1px;height:40px;background:#65686d;"></div>
<div class="a" style="left:217px;top:525px;width:970px;height:1px;background:#f2f3f5;"></div>
<div class="a" style="left:1186px;top:486px;width:1px;height:40px;background:#f2f3f5;"></div>
<div class="a" style="left:216px;top:526px;width:972px;height:1px;background:#fff;"></div>
<div class="a" style="left:1187px;top:485px;width:1px;height:42px;background:#fff;"></div>
<div class="t" style="left:11px;top:493px;letter-spacing:0.471px">Filter:</div>
<div class="a" style="left:72px;top:491px;width:107px;height:30px;background:#fff;border:1px solid #b4b4b4;border-top-color:#8c8c8c;border-left-color:#9c9c9c;box-shadow:inset 0 1px 1px #d4d4d4"></div>
<div class="t" style="left:226px;top:493px;letter-spacing:0.471px">Filter:</div>
<div class="a" style="left:291px;top:490px;width:870px;height:32px;background:#fff;border:1px solid #6fa3d8;box-shadow:0 0 0 1px rgba(120,170,220,0.45),inset 1px 1px 0 #9a928a,inset 2px 2px 1px #d0d0d0"></div>
<svg class="a" style="left:186px;top:498px" width="16" height="16" viewBox="0 0 16 16"><path d="M3.5 0.6 L10.2 0.6 Q11 0.6 11.6 1.2 L14.4 4 Q15 4.6 15 5.4 L15 14.4 Q15 15.4 14 15.4 L3.5 15.4 Q2.5 15.4 2.5 14.4 L2.5 1.6 Q2.5 0.6 3.5 0.6 Z" fill="url(#doc)" stroke="#3a78d0" stroke-width="1.1"/><rect x="4" y="11.4" width="9.6" height="2.4" fill="#7ab4f0"/><path d="M4 11.4 h9.6" stroke="#fff" stroke-width="0.6"/><path d="M4.6 4.6 L1.4 8 L4.6 11.4 M7.8 4.6 L11 8 L7.8 11.4" fill="none" stroke="#fff" stroke-width="3"/><path d="M4.6 4.6 L1.4 8 L4.6 11.4 M7.8 4.6 L11 8 L7.8 11.4" fill="none" stroke="#4a8ee0" stroke-width="1.8"/></svg>
<svg class="a" style="left:1167px;top:498px" width="16" height="16" viewBox="0 0 16 16"><path d="M3.5 0.6 L10.2 0.6 Q11 0.6 11.6 1.2 L14.4 4 Q15 4.6 15 5.4 L15 14.4 Q15 15.4 14 15.4 L3.5 15.4 Q2.5 15.4 2.5 14.4 L2.5 1.6 Q2.5 0.6 3.5 0.6 Z" fill="url(#doc)" stroke="#3a78d0" stroke-width="1.1"/><rect x="4" y="11.4" width="9.6" height="2.4" fill="#7ab4f0"/><path d="M4 11.4 h9.6" stroke="#fff" stroke-width="0.6"/><path d="M4.6 4.6 L1.4 8 L4.6 11.4 M7.8 4.6 L11 8 L7.8 11.4" fill="none" stroke="#fff" stroke-width="3"/><path d="M4.6 4.6 L1.4 8 L4.6 11.4 M7.8 4.6 L11 8 L7.8 11.4" fill="none" stroke="#4a8ee0" stroke-width="1.8"/></svg>
<div class="a" style="left:3px;top:540px;width:1184px;height:141px;border:1px solid #9096a0;background:#fff;overflow:hidden"><div class="t" style="left:12px;top:12px;font-weight:bold;-webkit-text-stroke:0.4px #000;letter-spacing:1.348px">CreateH2BSimDatabaseScript.java</div><div class="t" style="left:12px;top:66px;letter-spacing:0.370px">Creates an empty file-based H2 BSim database</div><div class="t" style="left:12px;top:131px;font-weight:bold;letter-spacing:1.237px">Author:</div></div>
<svg class="a" style="left:1171px;top:541px" width="15" height="139" viewBox="0 0 15 139"><rect x="0" y="0" width="15" height="139" fill="url(#trv)"/><rect x="0" y="0" width="15" height="17" fill="url(#btv)"/><rect x="0" y="113" width="15" height="9" fill="url(#shv)"/><path d="M15.2 112 Q15.2 122 2 122 L2 123 L15.2 123 Z" fill="#e9ebee"/><rect x="0" y="122" width="15" height="17" fill="url(#btv)"/><rect x="0" y="138" width="15" height="1" fill="#c3c6cc"/><path d="M7.5 5.2 L11.3 11.8 L3.7 11.8 Z" fill="#353535"/><path d="M3.7 127.2 L11.3 127.2 L7.5 133.8 Z" fill="#353535"/><path d="M0 17.6 L1 17.6 Q14.4 17.6 14.4 28.5 L14.4 63.5 Q14.4 74.4 1 74.4 L0 74.4" fill="url(#thv)" stroke="#1d3856" stroke-width="1.2"/><rect x="0" y="18.2" width="1.4" height="55.6" fill="#f0f5f9"/></svg>
</body></html>
